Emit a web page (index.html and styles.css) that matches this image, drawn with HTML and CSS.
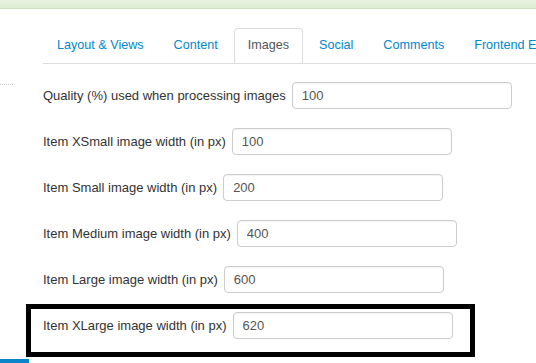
FILE: index.html
```html
<!DOCTYPE html>
<html lang="en">
<head>
    <meta charset="UTF-8">
    <meta name="viewport" content="width=device-width, initial-scale=1.0">
    <title>Images settings</title>
    <link rel="stylesheet" href="styles.css">
</head>
<body>
    <div class="topbar"></div>
    <div class="page">
        <div class="sidebar">
            <div class="side-line"></div>
            <div class="side-active"></div>
        </div>
        <div class="main">
            <ul class="tabs">
                <li><a href="#">Layout &amp; Views</a></li>
                <li><a href="#">Content</a></li>
                <li class="active"><a href="#">Images</a></li>
                <li><a href="#">Social</a></li>
                <li><a href="#">Comments</a></li>
                <li><a href="#">Frontend Editing</a></li>
            </ul>

            <div class="field">
                <label>Quality (%) used when processing images</label>
                <input type="text" value="100">
            </div>
            <div class="field">
                <label>Item XSmall image width (in px)</label>
                <input type="text" value="100">
            </div>
            <div class="field">
                <label>Item Small image width (in px)</label>
                <input type="text" value="200">
            </div>
            <div class="field">
                <label>Item Medium image width (in px)</label>
                <input type="text" value="400">
            </div>
            <div class="field">
                <label>Item Large image width (in px)</label>
                <input type="text" value="600">
            </div>
            <div class="highlight">
                <div class="field">
                    <label>Item XLarge image width (in px)</label>
                    <input type="text" value="620">
                </div>
            </div>
        </div>
    </div>
</body>
</html>
```

FILE: styles.css
```css
body {
    margin: 0;
    font-family: "Liberation Sans", Arial, sans-serif;
    font-size: 13px;
    color: #333;
    background: #fff;
    height: 100vh;
    overflow: hidden;
    display: flex;
    flex-direction: column;
}
.topbar {
    height: 8px;
    background: linear-gradient(#e8f3e1, #dcecd2);
    border-bottom: 1px solid #cfe2c2;
    flex-shrink: 0;
}
.page {
    flex: 1;
    display: flex;
    min-height: 0;
}
.sidebar {
    width: 29px;
    flex-shrink: 0;
    display: flex;
    flex-direction: column;
}
.side-line {
    margin-top: 75px;
    width: 13px;
    border-top: 1px dotted #c8c8c8;
}
.side-active {
    margin-top: auto;
    height: 4px;
    background: #0a85c9;
}
.main {
    flex: 1;
    padding-left: 14px;
    min-width: 0;
}
.tabs {
    list-style: none;
    margin: 19px 0 18px 0;
    padding: 0;
    display: flex;
    white-space: nowrap;
    overflow: hidden;
    border-bottom: 1px solid #ddd;
}
.tabs li {
    margin-right: 2px;
    margin-bottom: -1px;
}
.tabs a {
    display: block;
    padding: 7px 13px 8px;
    line-height: 19px;
    font-size: 12.6px;
    color: #0088cc;
    text-decoration: none;
    border: 1px solid transparent;
    border-radius: 4px 4px 0 0;
}
.tabs .active a {
    color: #555;
    background: #fff;
    border-color: #ddd #ddd transparent;
}
.field {
    display: flex;
    align-items: center;
    height: 27px;
}
.field + .field {
    margin-top: 19px;
}
.field label {
    margin-right: 6px;
    white-space: nowrap;
}
.field input {
    box-sizing: border-box;
    width: 220px;
    height: 27px;
    margin: 0;
    padding: 0 9px;
    font-family: "Liberation Sans", Arial, sans-serif;
    font-size: 13px;
    color: #555;
    border: 1px solid #ccc;
    border-radius: 4px;
    box-shadow: inset 0 1px 1px rgba(0, 0, 0, 0.05);
}
.highlight {
    box-sizing: border-box;
    width: 449px;
    margin: 11px 0 0 -17px;
    padding: 3px 0 13px 12px;
    border: 5px solid #000;
}
```
